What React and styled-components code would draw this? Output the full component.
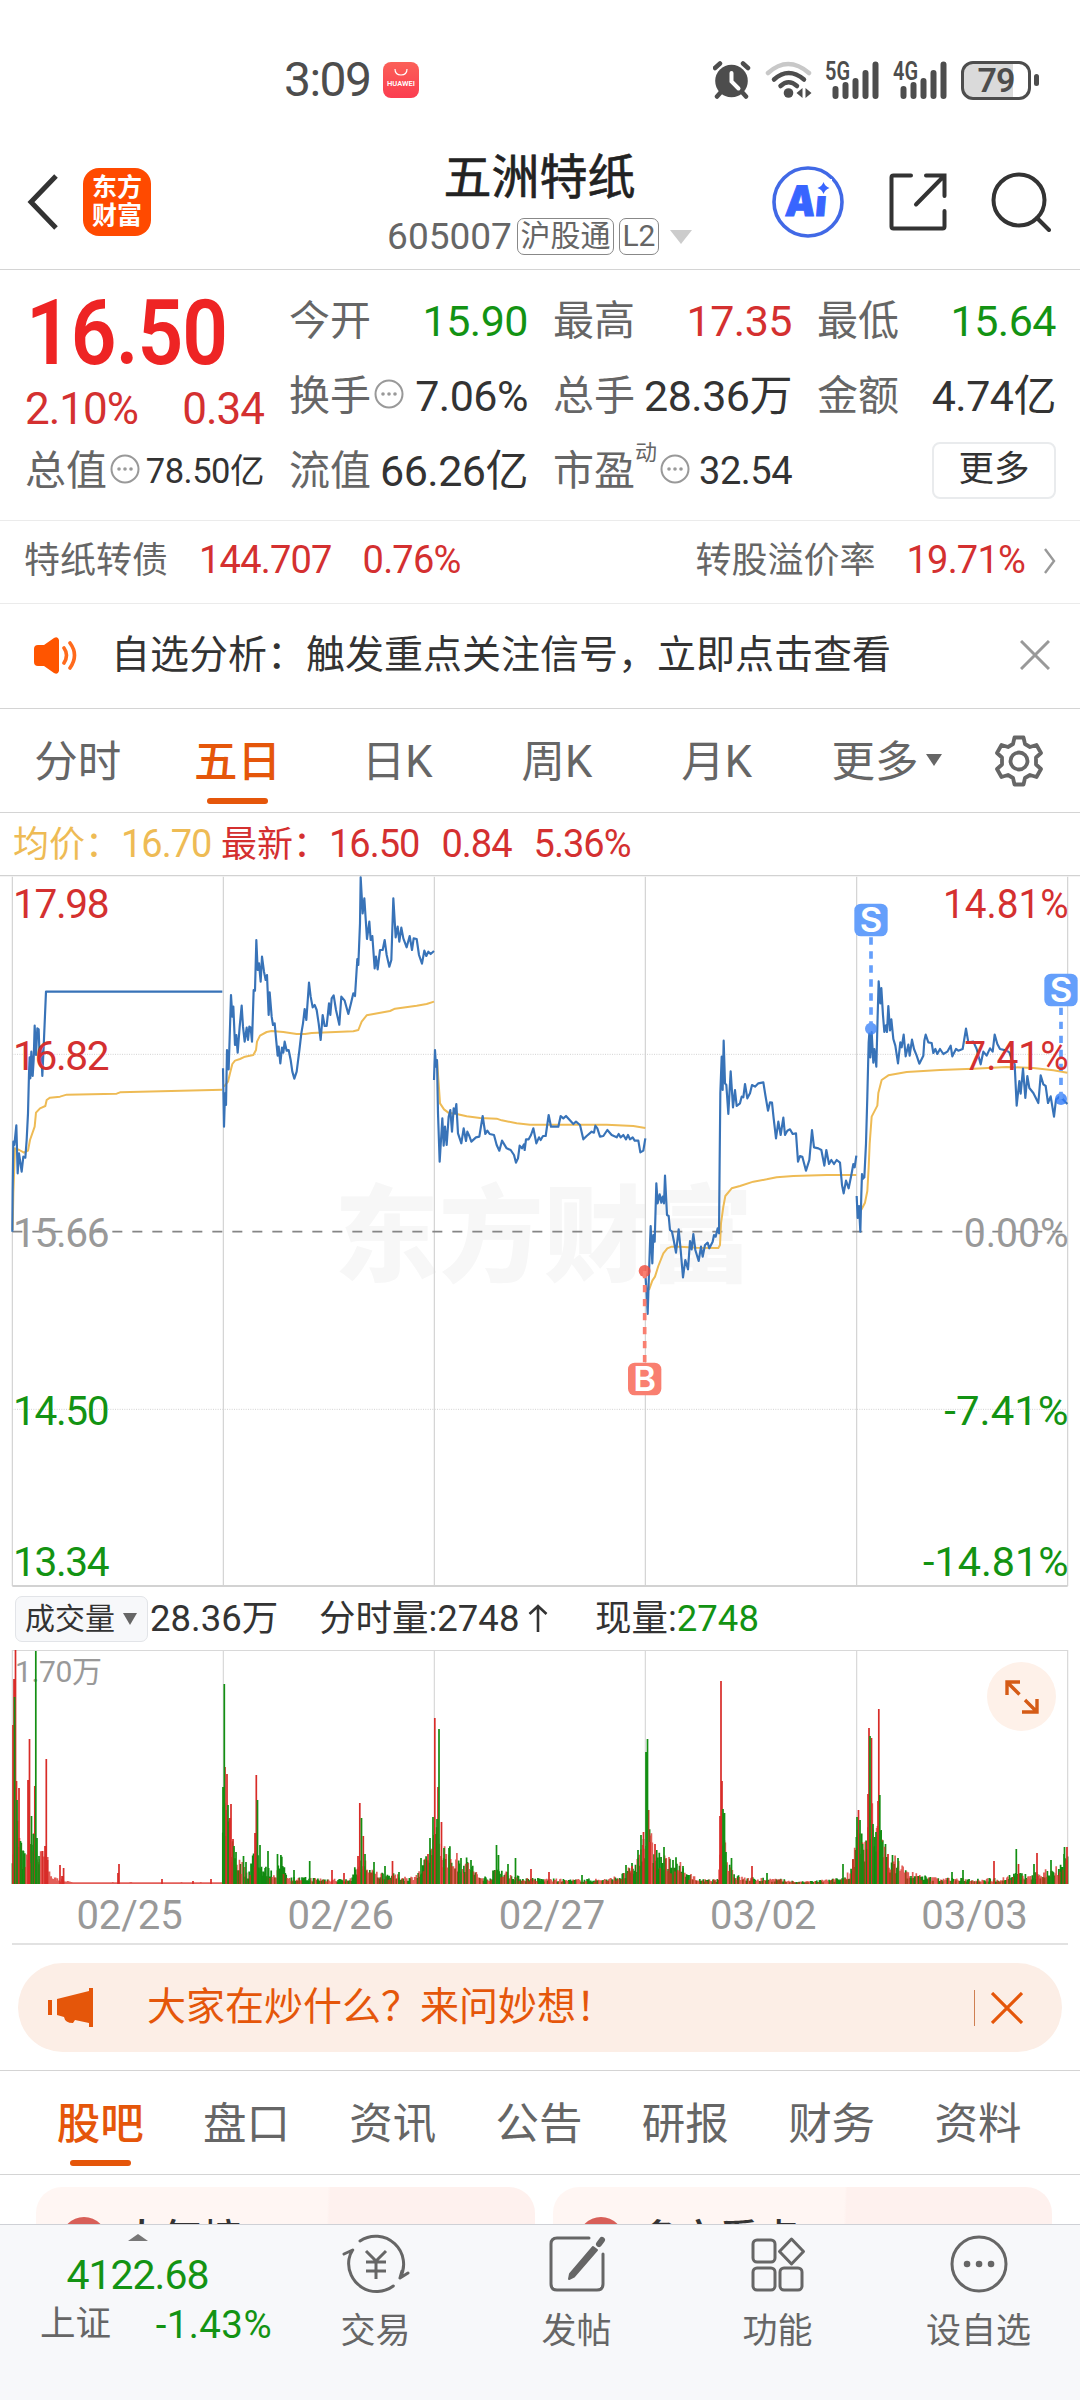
import React from 'react'
import styled, { createGlobalStyle } from 'styled-components'

const RED = '#d43030'
const GREEN = '#139313'
const ORANGE = '#e5560a'
const BLUE = '#3873b8'
const YELLOW = '#eebb55'

const TONES = { up: RED, down: GREEN, dark: '#333', gray: '#666' }

const periods = ['分时', '五日', '日K', '周K', '月K']
const sections = ['股吧', '盘口', '资讯', '公告', '研报', '财务', '资料']
const dates = ['02/25', '02/26', '02/27', '03/02', '03/03']

// price chart: 3 units per pixel
const GRID_X = [37, 670, 1303, 1936, 2570, 3203]

const prices = [
  '37,1115 38,990 40,845 43,855 49,796 53,940 57,880 65,935 70,890 76,893 80,840 84,760 87,640 89,592 91,655 94,575 98,648 101,600 104,497 108,585 112,505 116,508 119,600 123,560 127,648 131,560 138,395 667,395',
  '669,625 672,800 675,700 678,735 681,570 686,628 693,405 697,470 700,440 705,555 709,525 713,578 719,500 725,437 729,500 734,545 740,503 744,540 748,500 752,503 756,545 761,390 765,392 769,240 773,330 777,310 782,365 786,290 792,335 797,360 801,345 806,465 809,397 815,470 819,495 824,490 829,545 833,587 836,560 841,610 846,563 850,578 854,545 860,572 866,570 872,600 877,635 883,656 890,635 898,572 904,520 909,490 914,447 919,480 927,368 932,410 938,442 944,435 950,450 956,490 962,540 968,465 974,498 980,498 987,430 991,465 995,415 1001,406 1008,450 1018,494 1024,410 1034,422 1045,462 1053,430 1060,400 1065,408 1072,297 1075,315 1080,190 1082,52 1088,160 1093,115 1101,237 1108,185 1112,240 1117,228 1124,325 1128,290 1133,328 1140,270 1148,270 1154,240 1160,285 1168,320 1174,300 1180,115 1187,232 1193,200 1198,245 1204,203 1210,235 1220,262 1229,228 1236,270 1241,235 1250,237 1257,285 1266,311 1273,272 1279,288 1285,275 1292,282 1302,273',
  '1302,660 1305,570 1308,620 1311,600 1314,760 1319,905 1323,840 1327,775 1331,857 1335,800 1340,855 1346,770 1351,750 1356,815 1361,745 1365,760 1369,732 1374,820 1384,850 1391,805 1398,843 1402,815 1408,828 1414,845 1428,832 1438,830 1448,768 1456,822 1462,812 1469,822 1482,825 1490,855 1498,872 1506,842 1520,865 1532,870 1542,885 1548,908 1554,895 1559,857 1566,865 1572,853 1574,870 1578,838 1586,838 1593,825 1600,805 1609,850 1617,832 1622,840 1629,828 1637,828 1646,765 1653,800 1675,800 1682,768 1690,775 1698,768 1707,778 1720,792 1728,785 1740,795 1750,838 1760,828 1775,815 1782,818 1786,797 1792,805 1800,830 1810,828 1822,810 1835,825 1850,832 1856,822 1862,832 1870,825 1878,838 1884,825 1890,838 1898,832 1904,842 1915,842 1921,877 1930,872 1936,835',
  '1936,1240 1940,1300 1943,1362 1947,1240 1950,1150 1952,1098 1957,1210 1960,1125 1964,1145 1969,970 1973,1030 1979,1003 1984,1028 1988,1010 1992,1030 1995,947 2001,1065 2006,1068 2010,1110 2016,1115 2022,1145 2028,1178 2036,1108 2042,1170 2049,1252 2056,1200 2064,1228 2070,1143 2075,1168 2080,1122 2086,1170 2096,1203 2103,1160 2108,1190 2115,1155 2123,1148 2128,1165 2138,1145 2142,1125 2147,1130 2153,1105 2157,1120 2159,900 2161,700 2165,590 2168,690 2171,542 2175,670 2179,675 2185,762 2192,634 2199,742 2205,690 2210,738 2220,730 2225,710 2230,712 2235,672 2242,715 2250,700 2256,675 2265,680 2275,670 2290,667 2296,705 2304,752 2310,727 2316,728 2321,775 2328,835 2335,785 2342,825 2350,773 2355,825 2362,812 2370,808 2378,822 2388,820 2394,905 2400,888 2407,890 2418,932 2428,900 2436,810 2442,862 2455,865 2464,870 2473,917 2479,870 2487,912 2494,900 2502,912 2510,900 2520,908 2526,975 2531,1000 2538,962 2546,985 2555,940 2560,912 2564,922 2569,887',
  '2570,1008 2573,1074 2577,1038 2581,1115 2584,1003 2586,942 2588,957 2593,952 2598,851 2602,709 2606,547 2608,521 2611,592 2615,516 2620,608 2623,567 2629,620 2633,466 2636,364 2641,430 2644,384 2649,466 2653,516 2658,496 2661,516 2665,438 2670,511 2674,478 2680,537 2686,557 2694,610 2701,547 2705,562 2711,524 2717,589 2725,554 2729,587 2736,539 2742,567 2750,587 2758,611 2770,587 2773,542 2777,524 2785,547 2795,549 2800,579 2806,567 2812,582 2820,567 2830,582 2842,575 2852,557 2857,589 2868,567 2875,572 2888,567 2898,506 2905,547 2920,545 2930,567 2942,613 2950,575 2960,587 2970,565 2978,575 2984,524 2992,552 3000,567 3020,572 3028,577 3035,597 3044,613 3050,737 3058,663 3062,701 3069,626 3076,714 3082,648 3088,684 3100,699 3115,729 3122,646 3130,673 3137,678 3144,729 3152,709 3162,770 3168,719 3180,709 3190,719 3202,732',
]

const averages = [
  '38,1110 40,1000 45,865 58,870 72,878 84,872 90,840 104,800 108,758 120,745 136,738 140,720 150,713 180,710 200,704 350,701 360,697 667,689',
  '672,680 684,665 690,640 697,612 705,602 720,597 735,590 760,585 768,570 771,545 780,527 800,516 815,513 850,516 890,522 915,522 935,519 1060,514 1075,510 1085,485 1100,466 1170,453 1185,446 1250,437 1280,432 1302,425',
  '1311,600 1316,670 1320,730 1332,748 1345,758 1370,762 1400,769 1440,774 1490,776 1505,781 1550,790 1590,794 1820,794 1900,798 1936,804',
  '1947,1290 1957,1262 1965,1250 1975,1218 1990,1180 2002,1165 2015,1160 2040,1160 2090,1163 2155,1164 2160,1155 2163,1090 2170,1040 2176,1008 2195,985 2220,978 2260,965 2300,958 2330,952 2380,948 2480,945 2569,945',
  '2584,1049 2595,1028 2602,993 2606,922 2609,851 2615,770 2632,737 2635,699 2645,660 2665,646 2720,636 2820,630 2920,626 3020,621 3100,624 3160,631 3202,638',
]

const priceLabels = [
  { y: 175, left: '17.98', right: '14.81%', width: 377, color: RED },
  { y: 631, left: '16.82', right: '7.41%', width: 313, color: RED },
  { y: 1162, left: '15.66', right: '0.00%', width: 315, color: '#999' },
  { y: 1695, left: '14.50', right: '-7.41%', width: 373, color: GREEN },
  { y: 2148, left: '13.34', right: '-14.81%', width: 437, color: GREEN },
]

// typical bar height by x, in pixels
const volumeLevels = [
  [12, 45], [18, 60], [22, 30], [26, 25], [32, 48], [40, 28], [46, 32], [50, 10], [55, 6], [66, 3], [72, 1.5], [222, 1.5],
  [223, 70], [230, 50], [236, 28], [248, 10], [256, 40], [262, 17], [275, 10], [281, 24], [290, 6], [300, 6], [330, 5],
  [350, 4], [357, 18], [366, 22], [372, 12], [385, 10], [410, 6], [420, 12], [430, 30], [434, 60], [440, 40], [447, 33],
  [460, 24], [470, 22], [478, 8], [490, 6], [497, 18], [505, 12], [520, 6], [540, 5], [570, 4], [610, 5], [625, 10],
  [637, 22], [645, 60], [652, 40], [662, 24], [676, 22], [688, 10], [700, 4], [718, 4], [722, 60], [728, 24], [736, 8],
  [745, 6], [775, 5], [800, 2], [840, 5], [850, 12], [857, 50], [865, 35], [872, 80], [880, 50], [888, 26], [900, 22],
  [906, 12], [930, 6], [960, 5], [1000, 5], [1015, 10], [1030, 8], [1050, 14], [1060, 20], [1068, 34],
]

const volumePeaks = {
  up: [
    [13, 159], [14, 205], [15.5, 234], [16.5, 103], [19, 96], [28, 104], [29.5, 145], [34.8, 98], [42.5, 33], [45, 38],
    [46.3, 125], [47.5, 24], [60, 19], [62, 8], [63.6, 16], [118, 11], [119, 20], [162, 5], [193, 3], [211, 5],
    [225, 117], [227, 110], [229.5, 66], [231, 80], [233, 45], [255, 51], [256.3, 109], [332, 14], [344, 11], [358, 28],
    [359.8, 81], [363.3, 48], [392.5, 23], [428, 30], [434.8, 166], [438, 97], [441.5, 62], [531, 15], [549, 12],
    [632, 18], [643.5, 52], [648.6, 74], [650, 42], [655, 40], [720, 68], [721, 203], [722, 103], [752, 18], [853, 25],
    [858.5, 74], [868, 90], [869, 156], [871.5, 146], [878, 83], [878.8, 175], [888, 30], [994, 23], [1018.5, 20],
    [1037, 31], [1067, 37],
  ],
  down: [
    [14.6, 187], [17, 84], [20.5, 43], [23.5, 33], [31.5, 68], [33.5, 50], [35.8, 233], [37, 46], [39, 28],
    [223, 97], [224.3, 200], [228, 79], [234, 38], [236, 32], [243.5, 28], [246, 22], [257.5, 84], [260, 39], [268, 33],
    [277.5, 30], [294, 14], [309.7, 23], [361.5, 66], [365, 30], [374, 22], [385, 18], [399, 12], [421, 26], [430, 46],
    [433, 67], [437, 65], [439, 155], [444, 36], [449, 36], [461, 26], [471, 24], [496.5, 39], [498.5, 29], [508, 20],
    [515.5, 26], [582, 9], [626, 19], [638, 34], [641, 49], [646, 132], [647.5, 145], [664, 37], [673, 24], [683, 18],
    [723, 75], [724.5, 71], [726, 32], [731.5, 26], [767, 11], [843, 20], [857, 67], [860, 64], [862.5, 40], [870, 148],
    [873, 60], [876, 52], [879.8, 89], [881, 53], [882, 42], [898, 26], [952, 12], [963, 14], [1016.3, 35], [1034, 20],
    [1051, 24], [1064.5, 37],
  ],
}

const VOLUME_BASE = 234

function levelAt(x) {
  const i = volumeLevels.findIndex(([px]) => px >= x)
  if (i <= 0) return volumeLevels[0][1]
  const [x0, h0] = volumeLevels[i - 1]
  const [x1, h1] = volumeLevels[i]
  return h0 + ((h1 - h0) * (x - x0)) / (x1 - x0)
}

function buildVolume() {
  const bars = []
  let seed = 7
  const random = () => {
    seed = (seed * 16807) % 2147483647
    return seed / 2147483647
  }
  for (let x = 12.5; x < 1068; x += 0.88) {
    const height = Math.max(1.8, levelAt(x) * (0.45 + 0.8 * random() ** 1.3))
    const up = (x > 40 && x < 222) || random() < 0.48
    bars.push({ x, height, up })
  }
  return bars
}

const toPath = list => list.map(([x, h]) => `M${x.toFixed(1)} ${VOLUME_BASE}V${(VOLUME_BASE - h).toFixed(1)}`).join('')

function App() {
  return (
    <Screen>
      <GlobalStyle />
      <StatusBar />
      <Header />
      <Quote />
      <BondRow>
        <Label size={36}>特纸转债</Label>
        <BondValue tone='up'>144.707</BondValue>
        <BondValue tone='up' gap={31}>0.76%</BondValue>
        <Spacer />
        <Label size={36}>转股溢价率</Label>
        <BondValue tone='up'>19.71%</BondValue>
        <svg width='14' height='26' viewBox='0 0 14 26' fill='none' stroke='#999' strokeWidth='2.4'>
          <path d='M2 1l9 12-9 12' />
        </svg>
      </BondRow>
      <Notice>
        <svg width='46' height='38' viewBox='0 0 46 38'>
          <path d='M1 13q0-4 4-4h6L21 2q4-2 5 2v31q-1 4-5 2l-10-7H5q-4 0-4-4z' fill='#ff5500' />
          <path d='M31 12q5 7 0 15M37 7q9 12 0 25' fill='none' stroke='#ff6a1c' strokeWidth='3.6' strokeLinecap='round' />
        </svg>
        <NoticeText>自选分析：触发重点关注信号，立即点击查看</NoticeText>
        <svg width='30' height='30' viewBox='0 0 30 30' stroke='#999' strokeWidth='3'>
          <path d='M1 1l28 28M29 1L1 29' />
        </svg>
      </Notice>
      <PeriodTabs>
        {periods.map((name, i) => (
          <PeriodTab key={name} active={i === 1 ? 1 : 0}>{name}</PeriodTab>
        ))}
        <PeriodTab wide={1}>更多<Caret size={8} ratio={1.6} color='#666' /></PeriodTab>
        <GearIcon />
      </PeriodTabs>
      <Legend>
        <Average>均价：<b>16.70</b></Average>
        <Latest>最新：<b>16.50</b><b>0.84</b><b>5.36%</b></Latest>
      </Legend>
      <PriceChart />
      <VolumeRow>
        <VolumeSelect>成交量<Caret size={7.5} ratio={1.6} color='#666' /></VolumeSelect>
        <VolumeText width={169}>28.36万</VolumeText>
        <VolumeText width={276}>分时量:2748<Arrow /></VolumeText>
        <VolumeText>现量:<em>2748</em></VolumeText>
      </VolumeRow>
      <VolumeChart />
      <DateRow>
        {dates.map(date => <span key={date}>{date}</span>)}
      </DateRow>
      <Banner>
        <svg width='46' height='40' viewBox='0 0 46 40' fill={ORANGE}>
          <path d='M0 12h4v15H0zM9 11L41 3V0h4v39h-4v-4l-14-3-2 3q-8 0-9-6L9 27z' />
        </svg>
        <BannerText>大家在炒什么？来问妙想！</BannerText>
        <BannerLine />
        <svg width='32' height='32' viewBox='0 0 32 32' stroke={ORANGE} strokeWidth='3.2'>
          <path d='M1 1l30 30M31 1L1 31' />
        </svg>
      </Banner>
      <SectionTabs>
        {sections.map((name, i) => (
          <SectionTab key={name} active={i === 0 ? 1 : 0}>{name}</SectionTab>
        ))}
      </SectionTabs>
      <Cards>
        <Card><CardDot /><CardTitle>人气榜</CardTitle></Card>
        <Card><CardDot /><CardTitle>多空看点</CardTitle></Card>
      </Cards>
      <BottomNav />
    </Screen>
  )
}

export default App

function Signal({ label }) {
  return (
    <svg width='56' height='38' viewBox='0 0 56 38'>
      <text x='0' y='19' fontFamily='Roboto' fontWeight='600' fontSize='25' textLength='25' lengthAdjust='spacingAndGlyphs' fill='#4d4d4d'>{label}</text>
      <path d='M10.5 28v7M20.5 24v11M30.5 20v15M40.5 12v23M50.5 3.5v31.5' stroke='#4d4d4d' strokeWidth='6' strokeLinecap='round' />
    </svg>
  )
}

function StatusBar() {
  return (
    <StatusBarRow>
      <Time>3:09</Time>
      <StoreIcon>
        <svg width='14' height='8' viewBox='0 0 14 8' fill='none' stroke='#fff' strokeWidth='1.2'>
          <path d='M1 0q0 6 6 6t6-6' />
        </svg>
        <span>HUAWEI</span>
      </StoreIcon>
      <Spacer />
      <StatusIcons>
        <svg width='38' height='38' viewBox='0 0 38 38' stroke='#4d4d4d' strokeLinecap='round' fill='none'>
          <circle cx='18.5' cy='20' r='16.3' fill='#4d4d4d' stroke='none' />
          <path d='M2 7l5-4.5M35 7l-5-4.5' strokeWidth='4.5' />
          <path d='M8 31l-4 4.5M29 31l4 4.5' strokeWidth='4.5' />
          <path d='M18.5 12v8.5l7 7' stroke='#fff' strokeWidth='4' />
        </svg>
        <svg width='48' height='38' viewBox='0 0 48 38' fill='none' strokeLinecap='round' strokeWidth='4.5'>
          <path d='M3 12q20-18 41 0' stroke='#c8c8c8' />
          <path d='M9 18.5q14.5-13 30 0M15.5 25q8-7.5 16.5 0' stroke='#4d4d4d' />
          <circle cx='23.5' cy='32' r='4.8' fill='#4d4d4d' />
          <path d='M31.5 32l6-5v10zM46.5 32l-6-5v10z' fill='#4d4d4d' />
        </svg>
        <Signal label='5G' />
        <Signal label='4G' />
        <Battery><BatteryBody>79</BatteryBody><BatteryTip /></Battery>
      </StatusIcons>
    </StatusBarRow>
  )
}

function Header() {
  return (
    <HeaderRow>
      <HeaderSide>
        <svg width='32' height='56' viewBox='0 0 32 56' fill='none' stroke='#333' strokeWidth='5'>
          <path d='M29 2L4 28l25 26' />
        </svg>
        <Logo>东方<br />财富</Logo>
      </HeaderSide>
      <TitleBlock>
        <StockName>五洲特纸</StockName>
        <StockCode>
          <span>605007</span>
          <Tag width={97}>沪股通</Tag>
          <Tag width={40}>L2</Tag>
          <Caret size={11} color='#ccc' />
        </StockCode>
      </TitleBlock>
      <HeaderSide end={1}>
        <svg width='72' height='72' viewBox='0 0 72 72'>
          <circle cx='36' cy='36' r='34' fill='none' stroke='#4169e6' strokeWidth='3.6' />
          <g transform='skewX(-5)'>
            <text x='17' y='50' fontFamily='Inter' fontWeight='900' fontSize='42' textLength='41' lengthAdjust='spacingAndGlyphs' fill='#3865ff' stroke='#3865ff'>Ai</text>
          </g>
          <path d='M42 13h18v17H44z' fill='#fff' />
          <path d='M51.5 16q1.5 4.5 6 6-4.5 1.5-6 6-1.5-4.5-6-6 4.5-1.5 6-6z' fill='#3865ff' />
        </svg>
        <svg width='58' height='58' viewBox='0 0 58 58' fill='none' stroke='#333' strokeWidth='4' strokeLinecap='round'>
          <path d='M22 2.5H4.5q-2 0-2 2v49q0 2 2 2h49q2 0 2-2V38M37 2.5h18.5V23M54 4L27 31.5' />
        </svg>
        <svg width='60' height='60' viewBox='0 0 60 60' fill='none' stroke='#333' strokeWidth='4' strokeLinecap='round'>
          <circle cx='28' cy='28' r='25.5' />
          <path d='M46 46l12 12' />
        </svg>
      </HeaderSide>
    </HeaderRow>
  )
}

function Info() {
  return (
    <InfoSvg viewBox='0 0 30 30'>
      <circle cx='15' cy='15' r='13.5' fill='none' stroke='#999' strokeWidth='2' />
      <circle cx='9' cy='15' r='1.8' fill='#999' />
      <circle cx='15' cy='15' r='1.8' fill='#999' />
      <circle cx='21' cy='15' r='1.8' fill='#999' />
    </InfoSvg>
  )
}

function Quote() {
  return (
    <QuoteGrid>
      <PriceCell>
        <Price>16.50</Price>
        <Change><span>2.10%</span><span>0.34</span></Change>
      </PriceCell>
      <Cell><Label>今开</Label><Value tone='down'>15.90</Value></Cell>
      <Cell><Label>最高</Label><Value tone='up'>17.35</Value></Cell>
      <Cell><Label>最低</Label><Value tone='down'>15.64</Value></Cell>
      <Cell><Label>换手</Label><Info /><Value>7.06%</Value></Cell>
      <Cell><Label>总手</Label><Value>28.36万</Value></Cell>
      <Cell><Label>金额</Label><Value>4.74亿</Value></Cell>
      <Cell><Label>总值</Label><Info /><Value size={34.5}>78.50亿</Value></Cell>
      <Cell><Label>流值</Label><Value>66.26亿</Value></Cell>
      <Cell><Label>市盈<sup>动</sup></Label><Info /><Value size={38}>32.54</Value></Cell>
      <Cell><MoreButton>更多</MoreButton></Cell>
    </QuoteGrid>
  )
}

function GearIcon() {
  return (
    <GearSvg viewBox='0 0 52 52' fill='none' stroke='#666' strokeWidth='3.8' strokeLinejoin='round'>
      <path d='M21.5 2.5h9l1.5 6.5 5 3 6.5-2 4.5 8-5 4.5v7l5 4.5-4.5 8-6.5-2-5 3-1.5 6.5h-9L20 43l-5-3-6.5 2L4 34l5-4.5v-7L4 18l4.5-8 6.5 2 5-3z' />
      <circle cx='26' cy='26' r='8.5' />
    </GearSvg>
  )
}

function Marker({ x, y, dotY, letter, color, dotColor }) {
  const below = y > dotY
  return (
    <g>
      <circle cx={x} cy={dotY} r='18' fill={dotColor} opacity='0.8' />
      <line x1={x} x2={x} y1={dotY} y2={below ? y - 50 : y + 50} stroke={color} strokeWidth='11' strokeDasharray='22 20' />
      <rect x={x - 50} y={y - 49} width='100' height='98' rx='20' fill={color} />
      <text x={x} y={y + 37} textAnchor='middle' fontFamily='Inter' fontWeight='600' fontSize='104' fill='#fff'>{letter}</text>
    </g>
  )
}

function PriceChart() {
  return (
    <ChartSvg height='712' viewBox='0 45 3240 2136'>
      <text x='1003' y='1240' fontFamily='Noto Sans CJK SC' fontWeight='900' fontSize='314' textLength='1256' fill='#f7f7f7'>东方财富</text>
      <g stroke='#d2d2d2' strokeWidth='3.5'>
        <path d='M0 47H3240' />
        {GRID_X.map(x => <path key={x} d={`M${x} 50V2178`} />)}
        <path d='M37 2178H3203' strokeWidth='6' />
        <path d='M37 583H3203M37 1648H3203' strokeDasharray='3 4' strokeWidth='3' />
      </g>
      <path d='M37 1115H3203' stroke='#858585' strokeWidth='5' strokeDasharray='30 30' />
      <g fill='none' strokeLinejoin='round'>
        {averages.map(points => <polyline key={points} points={points} stroke={YELLOW} strokeWidth='6' />)}
        {prices.map(points => <polyline key={points} points={points} stroke={BLUE} strokeWidth='6.5' />)}
      </g>
      <Marker x={1934} y={1557} dotY={1233} letter='B' color='#f97f70' dotColor='#f04a3a' />
      <Marker x={2613} y={180} dotY={506} letter='S' color='#659ffb' dotColor='#3f84f7' />
      <Marker x={3183} y={390} dotY={717} letter='S' color='#659ffb' dotColor='#2f7af7' />
      <g fontFamily='Roboto' fontSize='122'>
        {priceLabels.map(({ y, left, right, width, color }) => (
          <g key={left} fill={color}>
            <text x='39' y={y} textLength='290'>{left}</text>
            <text x='3206' y={y} textAnchor='end' textLength={width} lengthAdjust='spacingAndGlyphs'>{right}</text>
          </g>
        ))}
      </g>
    </ChartSvg>
  )
}

function VolumeChart() {
  const bars = buildVolume()
  const up = bars.filter(bar => bar.up).map(bar => [bar.x, bar.height])
  const down = bars.filter(bar => !bar.up).map(bar => [bar.x, bar.height])
  return (
    <VolumeBox>
      <ChartSvg height='235' viewBox='0 0 1080 235'>
        <g stroke='#d8d8d8' strokeWidth='1.2'>
          <path d='M12 .5H1068' />
          {GRID_X.map(x => <path key={x} d={`M${x / 3} 0V234`} />)}
        </g>
        <text x='15' y='32' fontFamily='Roboto, Noto Sans CJK SC' fontSize='30' textLength='87' fill='#999'>1.70万</text>
        <g strokeWidth='1.7' fill='none'>
          <path d={toPath(down)} stroke='#108a10' />
          <path d={toPath(up)} stroke='#d82820' strokeOpacity='0.75' />
          <path d={toPath(volumePeaks.up)} stroke='#d82c28' />
          <path d={toPath(volumePeaks.down)} stroke='#138f13' />
        </g>
      </ChartSvg>
      <ExpandButton>
        <svg width='34' height='34' viewBox='0 0 34 34' fill='none' stroke='#d55b16' strokeWidth='3.4'>
          <path d='M15 2H2v13M2 2l12.5 12.5M32 19v13H17M32 32L20 20' />
        </svg>
      </ExpandButton>
    </VolumeBox>
  )
}

function Arrow() {
  return (
    <svg width='20' height='28' viewBox='0 0 20 28' fill='none' stroke='#333' strokeWidth='2.6'>
      <path d='M10 28V2M1.5 10L10 2l8.5 8' />
    </svg>
  )
}

function BottomNav() {
  const stroke = { fill: 'none', stroke: '#666', strokeWidth: 3, strokeLinecap: 'round', strokeLinejoin: 'round' }
  return (
    <Nav>
      <IndexCell>
        <UpCaret />
        <IndexValue>4122.68</IndexValue>
        <IndexLine><span>上证</span><em>-1.43%</em></IndexLine>
      </IndexCell>
      <NavItem>
        <svg width='68' height='60' viewBox='0 0 68 60' {...stroke}>
          <path d='M18 7A28 28 0 0 1 58 44M58 44l8-5M58 44l2-7' />
          <path d='M51.3 52A28 28 0 0 1 7 25q1-5 3.7-9L2 20' />
          <path d='M24 17l10 10 10-10M34 27v18M24 28h20M24 37h20' strokeLinecap='butt' />
        </svg>
        交易
      </NavItem>
      <NavItem>
        <svg width='60' height='60' viewBox='0 0 60 60' {...stroke}>
          <path d='M42 4H10q-6 0-6 6v40q0 6 6 6h40q6 0 6-6V20' />
          <path d='M46 13L23 40l-1 5 5-2.5L50 16z' fill='#666' strokeWidth='2' />
          <path d='M52 10l3-4' strokeWidth='6' />
        </svg>
        发帖
      </NavItem>
      <NavItem>
        <svg width='60' height='60' viewBox='0 0 60 60' {...stroke}>
          <rect x='5' y='6' width='22' height='22' rx='4' />
          <rect x='5' y='34' width='22' height='22' rx='4' />
          <rect x='32' y='34' width='22' height='22' rx='4' />
          <path d='M43.5 5l12 12.5-12 12.5-12-12.5z' />
        </svg>
        功能
      </NavItem>
      <NavItem>
        <svg width='60' height='60' viewBox='0 0 60 60' {...stroke}>
          <circle cx='30' cy='30' r='27' />
          <path d='M18 30h.1M30 30h.1M42 30h.1' strokeWidth='6.5' />
        </svg>
        设自选
      </NavItem>
    </Nav>
  )
}

const GlobalStyle = createGlobalStyle`
  * {
    box-sizing: border-box;
  }

  body {
    margin: 0;
    background: #fff;
    font-family: Roboto, 'Noto Sans CJK SC', sans-serif;
    line-height: 1.2;
  }

  svg {
    display: block;
    flex-shrink: 0;
  }

  em, b {
    font-style: normal;
    font-weight: 400;
  }
`

const Screen = styled.div`
  width: 1080px;
  height: 2400px;
  overflow: hidden;
  background: #fff;
  color: #333;
  white-space: nowrap;
`

const Spacer = styled.div`
  flex: 1;
`

const Caret = styled.i`
  border: ${props => props.size}px solid transparent;
  border-top: ${props => props.size * (props.ratio || 1.3)}px solid ${props => props.color};
  border-bottom: 0;
`

const StatusBarRow = styled.div`
  display: flex;
  align-items: center;
  height: 140px;
  padding: 20px 41px 0 284px;
`

const Time = styled.span`
  width: 99px;
  font-size: 48px;
  line-height: 60px;
  letter-spacing: -1.5px;
  color: #4d4d4d;
`

const StoreIcon = styled.div`
  display: flex;
  flex-direction: column;
  align-items: center;
  gap: 2px;
  width: 36px;
  height: 36px;
  padding-top: 7px;
  border-radius: 8px;
  background: linear-gradient(#fb6058, #fb3d50);

  span {
    font-size: 7.5px;
    line-height: 10px;
    font-weight: 600;
    color: #fff;
  }
`

const StatusIcons = styled.div`
  display: flex;
  align-items: center;
  gap: 14px;

  svg:nth-child(3) {
    margin-left: -2px;
  }

  svg:nth-child(4) {
    margin-left: -2px;
  }
`

const Battery = styled.div`
  display: flex;
  align-items: center;
  gap: 3px;
  margin-left: -2px;
`

const BatteryBody = styled.div`
  width: 70px;
  height: 39px;
  border: 3px solid #4d4d4d;
  border-radius: 12px;
  background: linear-gradient(90deg, #dadada 76%, #fff 76%);
  color: #4d4d4d;
  font-size: 34px;
  font-weight: 600;
  line-height: 33px;
  text-align: center;
  letter-spacing: -1px;
`

const BatteryTip = styled.div`
  width: 5px;
  height: 12px;
  border-radius: 3px;
  background: #4d4d4d;
`

const HeaderRow = styled.header`
  display: flex;
  justify-content: space-between;
  height: 130px;
  border-bottom: 1px solid #d4d4d4;
`

const HeaderSide = styled.div`
  display: flex;
  align-items: center;
  justify-content: ${props => (props.end ? 'space-between' : 'flex-start')};
  gap: ${props => (props.end ? 0 : 24)}px;
  width: ${props => (props.end ? 308 : 330)}px;
  padding: ${props => (props.end ? '0 29px 6px 0' : '0 0 6px 27px')};
`

const Logo = styled.div`
  width: 68px;
  height: 68px;
  padding-top: 6px;
  border-radius: 16px;
  background: #ff4a00;
  color: #fff;
  font-size: 25px;
  font-weight: 700;
  line-height: 28px;
  text-align: center;
`

const TitleBlock = styled.div`
  display: flex;
  flex-direction: column;
  align-items: center;
  gap: 13px;
  padding-top: 11px;
  margin-right: 23px;
`

const StockName = styled.h1`
  margin: 0;
  font-size: 48px;
  font-weight: 400;
  line-height: 54px;
  color: #222;
  -webkit-text-stroke: 0.6px #222;
`

const StockCode = styled.div`
  display: flex;
  align-items: center;
  gap: 5px;
  font-size: 37px;
  line-height: 36px;
  color: #666;

  i {
    margin-left: 6px;
  }
`

const Tag = styled.span`
  width: ${props => props.width}px;
  height: 37px;
  border: 1.5px solid #888;
  border-radius: 7px;
  font-size: 30px;
  line-height: 34px;
  text-align: center;
`

const QuoteGrid = styled.section`
  display: grid;
  grid-template-columns: repeat(4, 239px);
  grid-template-rows: repeat(3, 75px);
  column-gap: 25px;
  height: 251px;
  padding: 13px 25px 0;
  border-bottom: 1px solid #ebebeb;
`

const PriceCell = styled.div`
  grid-row: span 2;
  padding-top: 7px;
`

const Price = styled.div`
  padding-left: 1px;
  font-size: 90px;
  font-weight: 600;
  line-height: 88px;
  letter-spacing: -1px;
  color: #ee2424;
  transform: scaleX(0.89);
  transform-origin: left;
`

const Change = styled.div`
  display: flex;
  justify-content: space-between;
  font-size: 44px;
  line-height: 62px;
  letter-spacing: -1px;
  color: ${RED};
`

const Cell = styled.div`
  display: flex;
  align-items: center;
`

const Label = styled.span`
  font-size: ${props => props.size || 41}px;
  line-height: 50px;
  color: #666;

  sup {
    position: relative;
    top: -10px;
    font-size: 22px;
    line-height: 0;
  }
`

const InfoSvg = styled.svg`
  width: 30px;
  height: 30px;
  margin-left: 3px;
  margin-top: -4px;
`

const Value = styled.span`
  margin-left: auto;
  font-size: ${props => props.size || 43}px;
  line-height: 50px;
  letter-spacing: -0.5px;
  color: ${props => TONES[props.tone || 'dark']};
`

const MoreButton = styled.button`
  width: 124px;
  height: 57px;
  margin-left: auto;
  padding: 0 0 3px;
  border: 2px solid #e9ebed;
  border-radius: 8px;
  background: #fff;
  font-family: inherit;
  font-size: 35.5px;
  line-height: 50px;
  color: #333;
`

const BondRow = styled.section`
  display: flex;
  align-items: center;
  height: 83px;
  padding: 0 23px 2px 24px;
  border-bottom: 1px solid #ebebeb;

  svg {
    margin-left: 18px;
  }
`

const BondValue = styled.span`
  margin-left: ${props => props.gap || 31}px;
  font-size: 38px;
  letter-spacing: -0.8px;
  color: ${props => TONES[props.tone]};
`

const Notice = styled.section`
  display: flex;
  align-items: center;
  height: 105px;
  padding: 0 30px 2px 33px;
  border-bottom: 1px solid #d4d4d4;
`

const NoticeText = styled.p`
  flex: 1;
  margin: 0 0 0 32px;
  font-size: 39px;
`

const PeriodTabs = styled.nav`
  display: flex;
  align-items: center;
  height: 104px;
  margin-left: -2px;
  border-bottom: 1px solid #d4d4d4;
`

const PeriodTab = styled.div`
  display: flex;
  align-items: center;
  justify-content: center;
  position: relative;
  width: ${props => (props.wide ? 195 : 159.7)}px;
  height: 103px;
  padding-top: 5px;
  font-size: 43.5px;
  font-weight: ${props => (props.active ? 500 : 400)};
  color: ${props => (props.active ? ORANGE : '#666')};

  i {
    margin: -6px 0 0 8px;
  }

  &:nth-child(6) {
    margin-left: -7px;
  }

  &::after {
    content: '';
    display: ${props => (props.active ? 'block' : 'none')};
    position: absolute;
    bottom: 8px;
    width: 61px;
    height: 6px;
    border-radius: 3px;
    background: ${ORANGE};
  }
`

const GearSvg = styled.svg`
  width: 52px;
  height: 52px;
  margin-left: 9px;
`

const Legend = styled.div`
  display: flex;
  align-items: center;
  height: 62px;
  padding: 2px 0 0 13px;
  font-size: 36px;

  b {
    margin-right: 22px;
    font-size: 38px;
    letter-spacing: -1px;
  }
`

const Average = styled.span`
  width: 208px;
  color: ${YELLOW};
`

const Latest = styled.span`
  color: ${RED};
`

const ChartSvg = styled.svg`
  width: 1080px;
`

const VolumeRow = styled.div`
  display: flex;
  align-items: center;
  height: 63px;
  padding-left: 15px;
`

const VolumeSelect = styled.div`
  display: flex;
  align-items: center;
  gap: 8px;
  width: 133px;
  height: 46px;
  margin-right: 2px;
  padding-left: 9px;
  border: 1.5px solid #e2e4e8;
  border-radius: 7px;
  background: #f7f8fa;
  font-size: 30px;
`

const VolumeText = styled.span`
  display: flex;
  align-items: center;
  width: ${props => props.width || 200}px;
  font-size: 36.5px;

  em {
    color: ${GREEN};
  }

  svg {
    margin-left: 9px;
  }
`

const VolumeBox = styled.div`
  position: relative;
`

const ExpandButton = styled.div`
  display: flex;
  align-items: center;
  justify-content: center;
  position: absolute;
  top: 12px;
  right: 24px;
  width: 69px;
  height: 69px;
  border-radius: 50%;
  background: #fef1e9;
`

const DateRow = styled.div`
  display: flex;
  height: 60px;
  margin: 0 12px;
  border-bottom: 2px solid #e2e2e2;
  font-size: 40px;
  line-height: 61px;
  color: #999;

  span {
    flex: 1;
    padding-left: 24px;
    text-align: center;
  }
`

const Banner = styled.div`
  display: flex;
  align-items: center;
  height: 89px;
  margin: 18px;
  padding: 0 39px 0 30px;
  border-radius: 45px;
  background: #fceee6;
  color: ${ORANGE};
`

const BannerText = styled.p`
  flex: 1;
  margin: 0 0 0 53px;
  font-size: 39px;
`

const BannerLine = styled.div`
  width: 1.5px;
  height: 36px;
  margin-right: 16px;
  background: #cf7f52;
`

const SectionTabs = styled.nav`
  display: flex;
  height: 105px;
  padding: 0 28px 0 27px;
  border-top: 1px solid #d4d4d4;
  border-bottom: 1px solid #d4d4d4;
`

const SectionTab = styled(PeriodTab)`
  width: 146.3px;

  &:nth-child(6) {
    margin-left: 0;
  }
`

const Cards = styled.div`
  display: flex;
  gap: 18px;
  height: 49px;
  padding: 12px 28px 0 36px;
  overflow: hidden;
`

const Card = styled.div`
  display: flex;
  gap: 15px;
  width: 499px;
  height: 120px;
  padding: 30px 25px;
  border-radius: 26px;
  background: linear-gradient(92deg, #fff6f3 58%, #fef1ee 58.5%);
`

const CardDot = styled.div`
  width: 46px;
  height: 46px;
  border-radius: 50%;
  background: #d85f58;
`

const CardTitle = styled.span`
  font-size: 40px;
  font-weight: 500;
  line-height: 46px;
`

const Nav = styled.nav`
  display: flex;
  height: 176px;
  border-top: 1px solid #cfd1d6;
  background: #f7f8fa;
`

const IndexCell = styled.div`
  display: flex;
  flex-direction: column;
  align-items: center;
  width: 275px;
  padding-top: 9px;
`

const UpCaret = styled.i`
  border: 10.5px solid transparent;
  border-top: 0;
  border-bottom: 7px solid #777;
`

const IndexValue = styled.div`
  margin-top: 10px;
  font-size: 41px;
  line-height: 48px;
  letter-spacing: -1px;
  color: ${GREEN};
`

const IndexLine = styled.div`
  display: flex;
  align-items: center;
  justify-content: space-between;
  width: 232px;
  margin: 0 0 0 37px;
  font-size: 35.5px;
  line-height: 51px;
  color: #666;

  em {
    font-size: 38.5px;
    letter-spacing: 0.4px;
    color: ${GREEN};
  }
`

const NavItem = styled.div`
  display: flex;
  flex-direction: column;
  align-items: center;
  gap: 17px;
  width: 201px;
  padding-top: 9px;
  font-size: 35px;
  color: #666;
`
